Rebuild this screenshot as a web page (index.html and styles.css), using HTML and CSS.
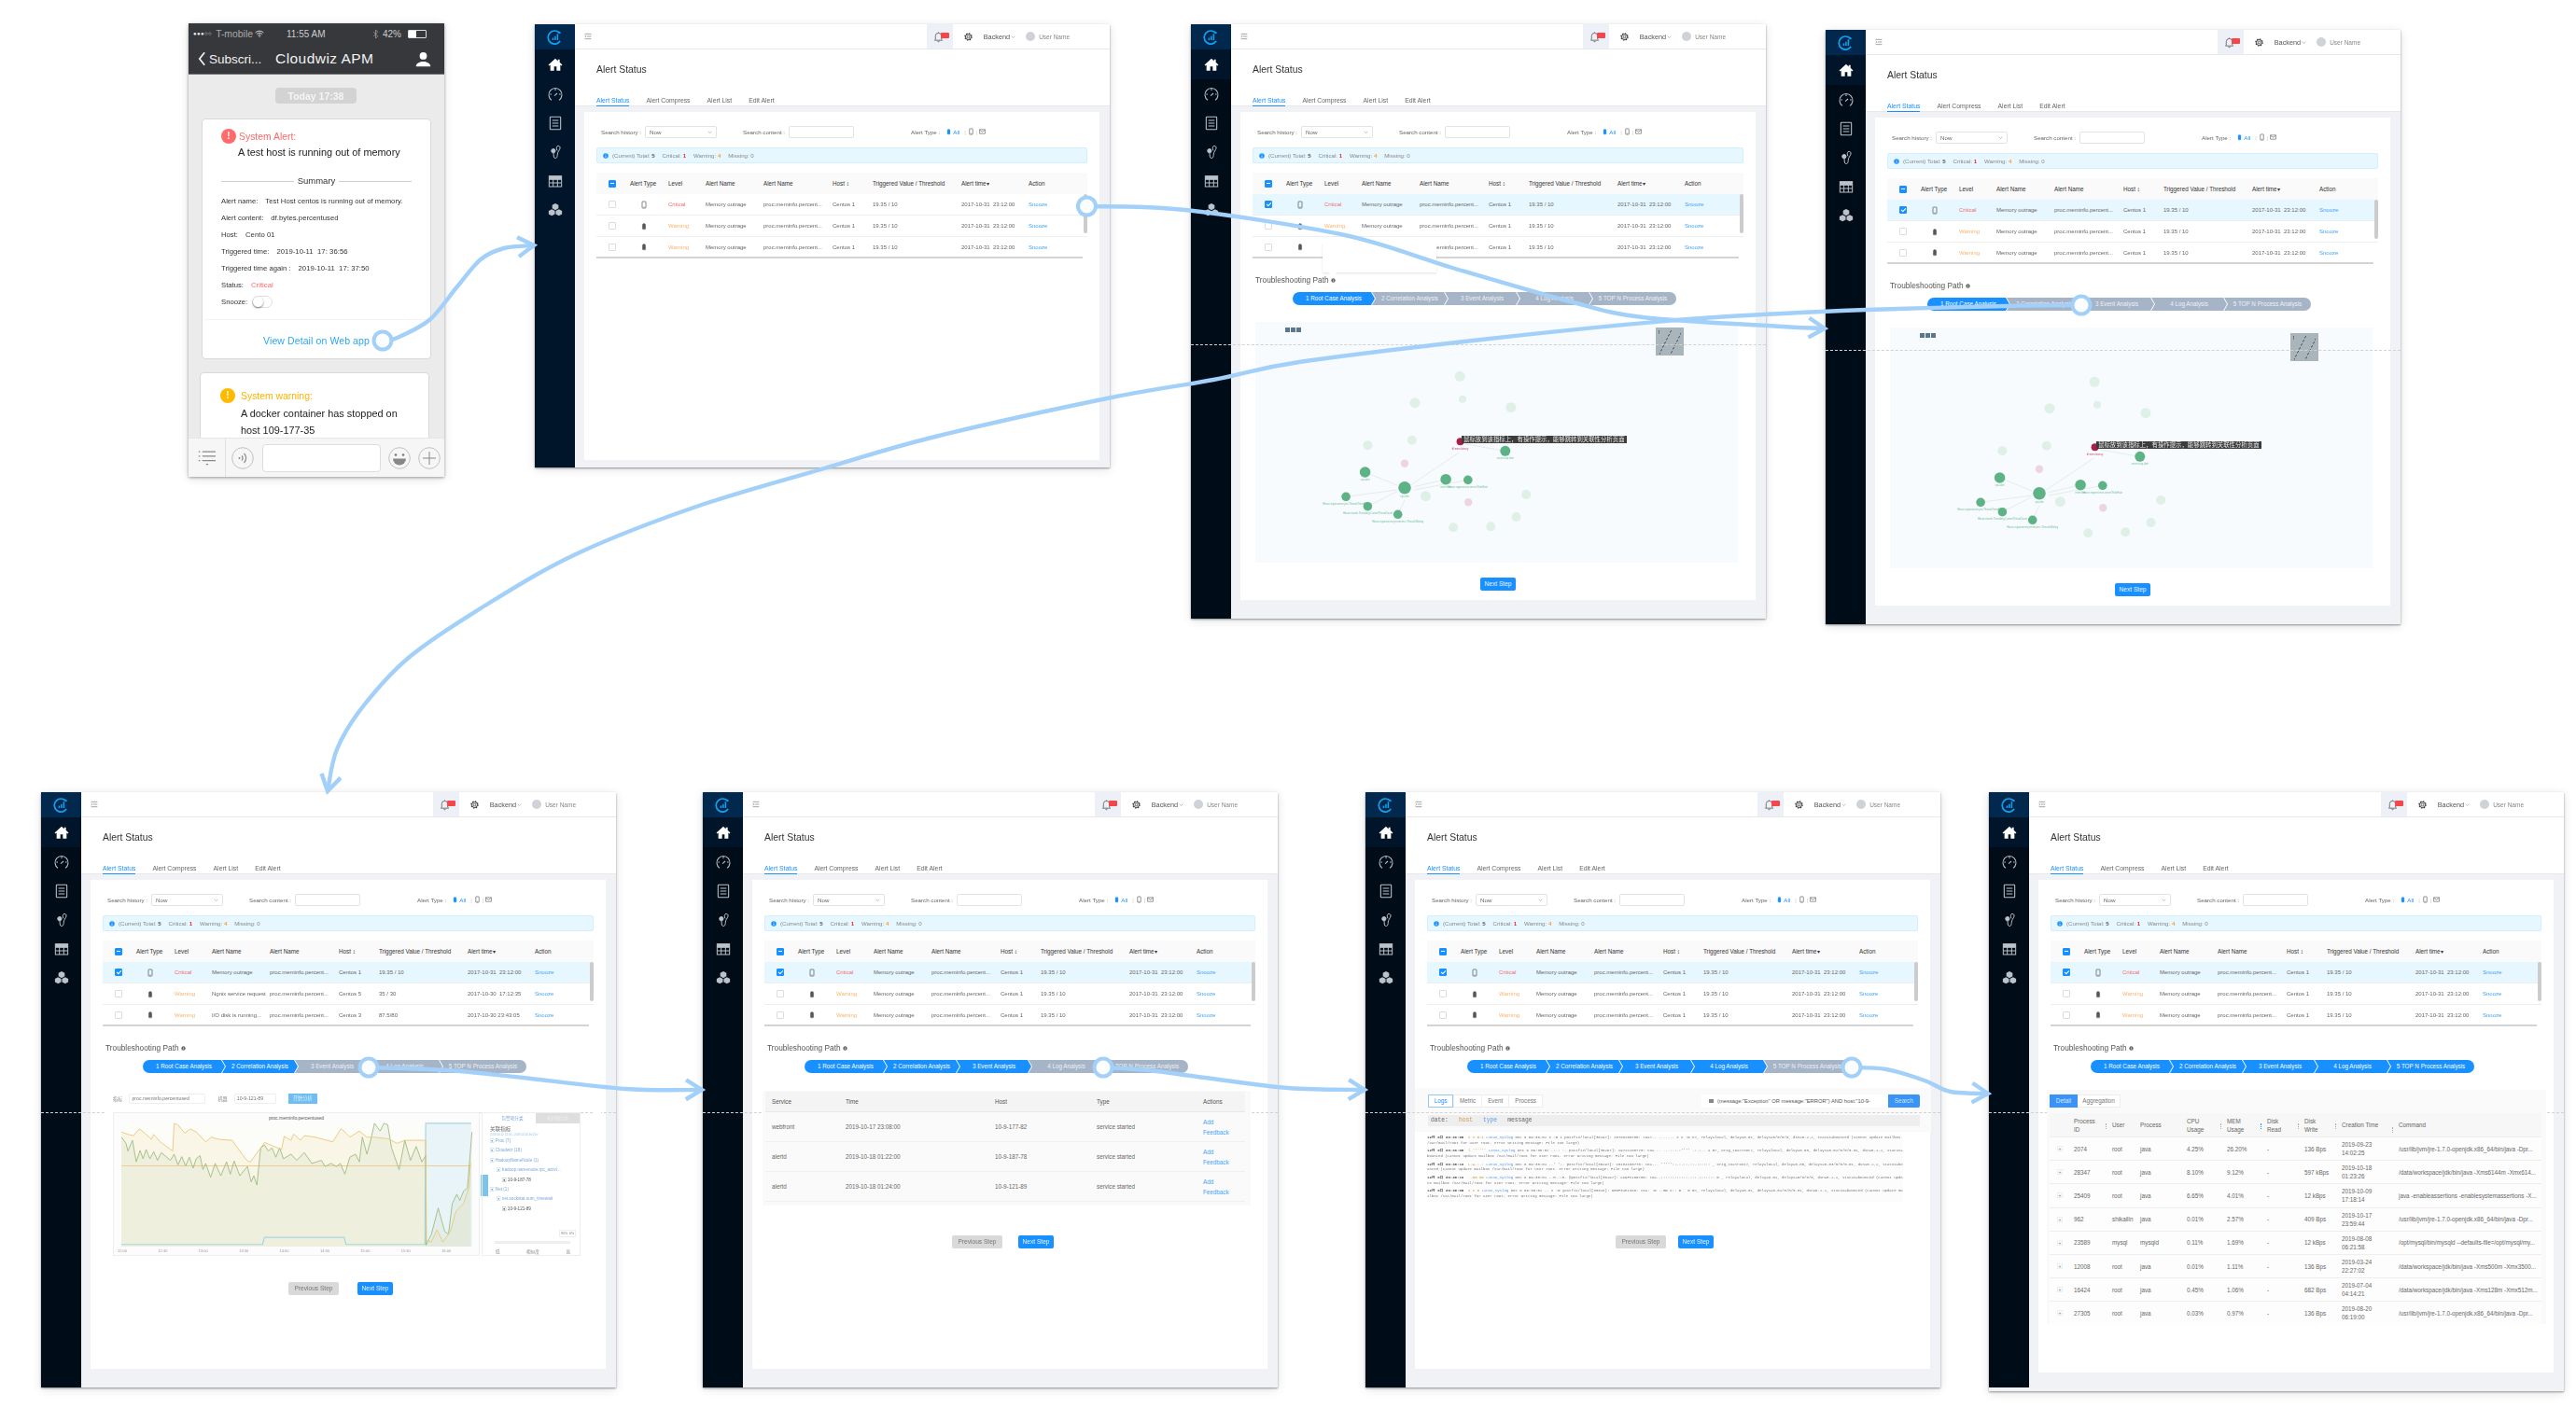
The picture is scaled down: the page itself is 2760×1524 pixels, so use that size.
FILE: index.html
```html
<!DOCTYPE html>
<html lang="en">
<head>
  <meta charset="UTF-8" />
  <title>Cloudwiz APM - alert troubleshooting flow</title>
  <link rel="stylesheet" href="styles.css">
</head>
<body>
  <svg class="defs" aria-hidden="true">
    <symbol id="i-home" viewBox="0 0 24 24"><path d="M12 2.5 .8 12.6l1.5 1.7L4 12.8V22h6v-6.5h4V22h6v-9.2l1.7 1.5 1.5-1.7-4.2-3.8V4h-3v2.8z" fill="currentColor"/></symbol>
    <symbol id="i-gauge" viewBox="0 0 24 24"><g fill="none" stroke="currentColor" stroke-width="1.6"><path d="M6 21.5A10.5 10.5 0 1 1 18 21.5"/><path d="M10.6 14.4 15 10.5"/><path d="M12 3.5v2.5M3.5 12H6M18 12h2.5"/></g></symbol>
    <symbol id="i-list" viewBox="0 0 24 24"><g fill="none" stroke="currentColor" stroke-width="1.6"><rect x="3.5" y="2" width="17" height="20" rx="1"/><path d="M7 7.5h10M7 12h10M7 16.500h10"/></g></symbol>
    <symbol id="i-stetho" viewBox="0 0 24 24"><g fill="none" stroke="currentColor" stroke-width="1.5"><path d="M15 2.500c2-1 4 0 4.500 1.500.8 3-2.500 6-3.500 9-1 3-.5 6-1.500 7.500-1.500 2-4.500 1.500-5-1-.5-2 0-4-.5-6"/><path d="M15 2.500c-1.500 2-1.500 4 0 7"/><circle cx="8.800" cy="10" r="3.200" fill="currentColor"/></g></symbol>
    <symbol id="i-table" viewBox="0 0 24 24"><g fill="none" stroke="currentColor" stroke-width="1.500"><rect x="2" y="4" width="20" height="17"/><path d="M2 9.500h20M2 15h20M8.500 4v17M15.500 4v17"/></g><rect x="2" y="4" width="20" height="5" fill="currentColor"/></symbol>
    <symbol id="i-cubes" viewBox="0 0 24 24"><g fill="currentColor"><path d="m12 1.500 5 2.700v5.300l-5 2.700-5-2.700V4.200z"/><path d="m6.300 10.800 5 2.700v5.300l-5 2.700-5-2.700v-5.300z"/><path d="m17.700 10.800 5 2.700v5.300l-5 2.700-5-2.700v-5.300z"/></g></symbol>
    <symbol id="i-logo" viewBox="0 0 24 24"><path d="M19.500 6.500A10 10 0 1 0 20 18.500" fill="none" stroke="#12a0f0" stroke-width="2.400"/><path d="M19 3.500l2.500 3-3.800.6zM8 13.500h2.200V17H8zM11.500 11h2.200v6h-2.200zM15 7.500h2.200V17H15z" fill="#12a0f0"/></symbol>
    <symbol id="i-menu" viewBox="0 0 24 24"><path d="M2 4h20M8 12h14M2 20h20M2 9l3.500 3L2 15" fill="none" stroke="#7d8287" stroke-width="2.200"/></symbol>
    <symbol id="i-bell" viewBox="0 0 24 24"><path d="M5 18V10a7 7 0 0 1 14 0v8l2 2H3zM10 21.500a2 2 0 0 0 4 0M12 1v2" fill="none" stroke="#555" stroke-width="1.700"/></symbol>
    <symbol id="i-gear" viewBox="0 0 24 24"><g fill="none" stroke="#333"><circle cx="12" cy="12" r="8" stroke-width="2.400"/><circle cx="12" cy="12" r="9.500" stroke-width="3.500" stroke-dasharray="3.700 3.760"/><circle cx="12" cy="12" r="3.500" stroke-width="2"/></g></symbol>
    <symbol id="i-pill" viewBox="0 0 24 24"><path d="M7 21V8a5 5 0 0 1 10 0v13zM10 23h4" fill="currentColor" stroke="currentColor"/></symbol>
    <symbol id="i-mobile" viewBox="0 0 24 24"><rect x="6" y="1.500" width="12" height="21" rx="2" fill="none" stroke="currentColor" stroke-width="2.200"/><path d="M10 19.500h4" stroke="currentColor" stroke-width="1.500"/></symbol>
    <symbol id="i-mail" viewBox="0 0 24 24"><path d="M2 4.500h20v15H2zM2 6l10 7 10-7" fill="none" stroke="currentColor" stroke-width="2"/></symbol>
    <symbol id="i-info" viewBox="0 0 24 24"><circle cx="12" cy="12" r="11" fill="#1890ff"/><path d="M12 5.500v2.500M12 10.500V19" stroke="#fff" stroke-width="3"/></symbol>
    <symbol id="i-dot" viewBox="0 0 24 24"><circle cx="12" cy="12" r="10.500" fill="#666"/><path d="M12 6v2.500M12 11v7" stroke="#fff" stroke-width="3"/></symbol>
    <symbol id="i-chev" viewBox="0 0 24 24"><path d="m3 8 9 9 9-9" fill="none" stroke="#888" stroke-width="2.500"/></symbol>
  </svg>

  <div class="canvas" id="canvas">
    <section class="phone">
      <div class="status-bar">
        <span class="signal">●●●○○</span><span class="carrier">T-mobile</span>
        <svg class="wifi" viewBox="0 0 24 18"><path d="M1.500 6.500c6-5.500 15-5.500 21 0M5 10c4-3.500 10-3.500 14 0M8.500 13.500c2-1.500 5-1.500 7 0" fill="none" stroke="#eee" stroke-width="2.200"/><circle cx="12" cy="16.500" r="1.500" fill="#eee"/></svg>
        <span class="clock">11:55 AM</span>
        <svg class="bt" viewBox="0 0 12 24"><path d="M1 7l10 10-5 5V2l5 5L1 17" fill="none" stroke="#aaa" stroke-width="1.500"/></svg>
        <span class="batt-pct">42%</span>
        <span class="battery"><i></i></span>
      </div>
      <div class="nav-bar">
        <svg class="back" viewBox="0 0 12 24"><path d="M10 2 2 12l8 10" fill="none" stroke="#f2f2f2" stroke-width="2.600"/></svg>
        <span class="back-label">Subscri...</span>
        <span class="nav-title">Cloudwiz APM</span>
        <svg class="user" viewBox="0 0 24 24"><circle cx="12" cy="7" r="5.500" fill="#fff"/><path d="M1 23c0-5 5-6 8-7.500h6c3 1.500 8 2.500 8 7.500z" fill="#fff"/></svg>
      </div>
      <div class="chat">
        <div class="date-pill">Today 17:38</div>
        <div class="msg-card">
          <div class="alert-head"><span class="badge badge-red">!</span><span class="head-red">System Alert:</span></div>
          <p class="alert-msg">A test host is running out of memory</p>
          <div class="summary"><i></i><span>Summary</span><i></i></div>
          <div class="fact">Alert name:<b>Test Host centos is running out of memory.</b></div>
          <div class="fact">Alert content:<b>df.bytes.percentused</b></div>
          <div class="fact">Host:<b>Cento 01</b></div>
          <div class="fact">Triggered time:<b>2019-10-11&nbsp; 17: 36:56</b></div>
          <div class="fact">Triggered time again :<b>2019-10-11&nbsp; 17: 37:50</b></div>
          <div class="fact">Status:<b class="critical">Critical</b></div>
          <div class="fact">Snooze:<span class="toggle"><i></i></span></div>
          <div class="msg-link">View Detail on Web app</div>
        </div>
        <div class="msg-card msg-card-warn">
          <div class="alert-head"><span class="badge badge-amber">!</span><span class="head-amber">System warning:</span></div>
          <p class="alert-msg">A docker container has stopped on<br>host 109-177-35</p>
        </div>
      </div>
      <div class="tool-bar">
        <span class="tool-menu"><svg viewBox="0 0 24 24"><path d="M6 4h18M6 10h18M6 16h18M1 4h2M1 10h2M1 16h2M11 21h3" fill="none" stroke="#8a8a8a" stroke-width="1.600"/></svg></span>
        <svg class="tool-ic tool-voice" viewBox="0 0 24 24"><circle cx="12" cy="12" r="11.300" fill="none" stroke="#aaa" stroke-width=".7"/><path d="M11 9.500a3.500 3.500 0 0 1 0 5M13.500 7a7 7 0 0 1 0 10" fill="none" stroke="#888" stroke-width="1.200"/><circle cx="8.500" cy="12" r="1" fill="#888"/></svg>
        <span class="tool-input"></span>
        <svg class="tool-ic" viewBox="0 0 24 24"><circle cx="12" cy="12" r="11.300" fill="none" stroke="#aaa" stroke-width=".7"/><circle cx="8" cy="8.500" r="1.300" fill="#777"/><circle cx="16" cy="8.500" r="1.300" fill="#777"/><path d="M5 12.500h14a7 7 0 0 1-14 0z" fill="#888"/></svg>
        <svg class="tool-ic" viewBox="0 0 24 24"><circle cx="12" cy="12" r="11.300" fill="none" stroke="#aaa" stroke-width=".7"/><path d="M12 5v14M5 12h14" stroke="#888" stroke-width="1"/></svg>
      </div>
    </section>
  </div>

  <script src="app.js"></script>
</body>
</html>
```

FILE: styles.css
```css
:root {
  --blue: #1890ff;
  --line: #a2d0f9;
  --grey-step: #a5b4c6;
  --page-bg: #f0f2f5;
  --text: #666;
  --text-dark: #3c3c3c;
}
html, body {
  margin: 0;
  padding: 0;
  background: #fff;
}
body {
  font-family: "Liberation Sans", "Noto Sans CJK SC", sans-serif;
  color: var(--text);
}
.defs {
  position: absolute;
  width: 0;
  height: 0;
}
.canvas {
  position: relative;
  width: 2760px;
  height: 1524px;
  overflow: hidden;
  filter: blur(.4px);
}

/* phone */
.phone {
  position: absolute;
  left: 202px;
  top: 25px;
  width: 274px;
  height: 486px;
  display: flex;
  flex-direction: column;
  background: #ebebeb;
  box-shadow: 0 1px 3px rgba(0,0,0,.35), 0 2px 10px rgba(0,0,0,.12);
}
.status-bar {
  height: 22px;
  padding: 0 6px 0 5px;
  display: flex;
  align-items: center;
  background: #36383c;
  color: #ccc;
  font-size: 10px;
}
.signal { font-size: 6px; letter-spacing: .4px; color: #eee; }
.carrier { margin-left: 4px; color: #aaa; font-size: 10.400px; }
.wifi { width: 10px; height: 8px; margin-left: 2px; }
.clock { margin-left: 24px; width: 60px; color: #ccc; font-size: 10px; }
.bt { width: 7px; height: 11px; margin-left: 32px; }
.batt-pct { margin-left: 4px; color: #ccc; }
.battery {
  margin-left: 7px;
  width: 18px;
  height: 7px;
  border: 1px solid #ddd;
  border-radius: 1px;
}
.battery i { display: block; width: 8px; height: 7px; background: #fff; }
.nav-bar {
  height: 33px;
  padding: 0 14px 0 10px;
  display: flex;
  align-items: center;
  background: #36383c;
  border-bottom: 1px solid #777;
  box-sizing: border-box;
  color: #f2f2f2;
}
.back { width: 9px; height: 16px; }
.back-label { margin-left: 3px; width: 71px; font-size: 13.500px; white-space: nowrap; }
.nav-title { font-size: 15.500px; letter-spacing: .45px; white-space: nowrap; }
.user { width: 17px; height: 17px; margin-left: auto; }
.chat {
  flex: 1;
  min-height: 0;
  overflow: hidden;
}
.date-pill {
  width: 87px;
  height: 17px;
  margin: 14px auto 0 93px;
  border-radius: 4px;
  background: #d3d3d3;
  color: #f5f5f5;
  font-size: 10.500px;
  font-weight: bold;
  line-height: 18px;
  text-align: center;
}
.msg-card {
  width: 246px;
  height: 258px;
  margin: 16px 0 0 14px;
  box-sizing: border-box;
  overflow: hidden;
  background: #fff;
  border: 1px solid #d9d9d9;
  border-radius: 4px;
}
.msg-card-warn {
  margin: 14px 0 0 12px;
  height: 120px;
  padding-top: 6px;
}
.alert-head {
  padding: 10px 0 0 20px;
  display: flex;
  align-items: center;
  gap: 3px;
  font-size: 10.400px;
}
.msg-card-warn .alert-head { gap: 6px; padding-left: 21px; }
.badge {
  width: 16px;
  height: 16px;
  border-radius: 50%;
  color: #fff;
  font-size: 10px;
  font-weight: bold;
  line-height: 16px;
  text-align: center;
}
.badge-red { background: #ff6b6b; }
.badge-amber { background: #ffba00; }
.head-red { color: #f96a6a; }
.head-amber { color: #ffb400; }
.alert-msg {
  margin: 0 0 0 38px;
  color: #222;
  font-size: 10.900px;
  line-height: 18px;
}
.msg-card-warn .alert-msg { margin-left: 43px; margin-top: 2px; }
.summary {
  margin: 13px 20px 0 20px;
  display: flex;
  align-items: center;
  gap: 4px;
  color: #333;
  font-size: 9.500px;
  line-height: 18px;
}
.summary i { flex: 1; height: 1px; background: #ccc; }
.fact {
  margin-left: 20px;
  display: flex;
  align-items: center;
  height: 18px;
  color: #333;
  font-size: 7.700px;
  white-space: nowrap;
}
.summary + .fact { margin-top: 3px; }
.fact b { margin-left: 8px; font-weight: normal; letter-spacing: .05px; }
.fact b.critical { color: #f96a6a; }
.toggle {
  margin-left: 5px;
  width: 20px;
  height: 11px;
  border: 1px solid #ddd;
  border-radius: 7px;
}
.toggle i {
  display: block;
  width: 11px;
  height: 11px;
  border-radius: 50%;
  background: #fff;
  box-shadow: 0 1px 2px rgba(0,0,0,.5);
}
.msg-link {
  margin: 10px 2px 0;
  border-top: 1px solid #f4f4f4;
  color: #2aa7f5;
  font-size: 10.500px;
  letter-spacing: .1px;
  line-height: 44px;
  text-align: center;
}
.tool-bar {
  height: 42px;
  display: flex;
  align-items: center;
  background: #f6f6f6;
  border-top: 1px solid #e6e6e6;
  box-sizing: border-box;
}
.tool-menu {
  width: 39px;
  height: 100%;
  border-right: 1px solid #e2e2e2;
  display: flex;
  align-items: center;
  justify-content: center;
}
.tool-menu svg { width: 19px; height: 19px; }
.tool-ic { width: 24px; height: 24px; margin-left: 8px; }
.tool-voice { margin-left: 6px; }
.tool-input {
  margin-left: 9px;
  width: 127px;
  height: 30px;
  background: #fff;
  border: 1px solid #ddd;
  border-radius: 4px;
  box-sizing: border-box;
}
.tool-input + .tool-ic { margin-left: 8px; }

/* app windows */
.win {
  position: absolute;
  width: 616px;
  display: flex;
  background: var(--page-bg);
  box-shadow: 0 1px 2px rgba(0,0,0,.4), 0 2px 10px rgba(0,0,0,.12);
}
.fold {
  position: absolute;
  left: 0;
  right: 0;
  top: 343px;
  border-top: 1px dashed #d2d2d2;
  z-index: 1;
}
.side {
  width: 43px;
  flex: none;
  background: #000c17;
  color: #bcc2c9;
  display: flex;
  flex-direction: column;
  align-items: center;
}
.side-navy { background: #001529; }
.side-short { align-self: flex-start; height: 638px; }
.side-logo {
  width: 100%;
  height: 27px;
  display: flex;
  align-items: center;
  justify-content: center;
  background: #02284e;
}
.side-logo svg { width: 17px; height: 17px; }
.side-item {
  width: 100%;
  height: 31px;
  display: flex;
  align-items: center;
  justify-content: center;
}
.side-item svg { width: 16px; height: 16px; }
.side-item-on {
  height: 32px;
  background: #001529;
  color: #fff;
}
.main {
  flex: 1;
  min-width: 0;
  display: flex;
  flex-direction: column;
}
.topbar {
  height: 27px;
  flex: none;
  padding: 0 43px 0 10px;
  box-sizing: border-box;
  display: flex;
  align-items: center;
  background: #fff;
  border-bottom: 1px solid #e8e8e8;
  font-size: 6.500px;
}
.topbar .menu { width: 8px; height: 8px; }
.bell-box {
  margin-left: auto;
  width: 28px;
  height: 100%;
  position: relative;
  display: flex;
  align-items: center;
  justify-content: center;
  background: #edf1f7;
}
.bell-box svg { width: 11px; height: 13px; margin-left: -2px; }
.bell-badge {
  position: absolute;
  left: 15px;
  top: 9px;
  width: 9px;
  height: 6px;
  border-radius: 1px;
  background: #f5474b;
}
.gear { width: 9px; height: 9px; margin-left: 12px; }
.backend { margin-left: 12px; color: #555; font-size: 7.300px; white-space: nowrap; }
.backend svg { width: 5px; height: 5px; margin-left: 1px; }
.avatar {
  width: 10px;
  height: 10px;
  margin-left: 11px;
  border-radius: 50%;
  background: #cfd3d8;
}
.user-name { margin-left: 4px; color: #888; white-space: nowrap; }
.page-head {
  height: 61px;
  flex: none;
  padding-left: 23px;
  box-sizing: border-box;
  background: #fff;
  border-bottom: 1px solid #e8e8e8;
}
.page-title {
  margin: 15px 0 0;
  color: #333;
  font-size: 10.400px;
  font-weight: normal;
  line-height: 14px;
}
.tabs {
  margin-top: 19px;
  display: flex;
  gap: 18px;
  font-size: 6.850px;
}
.tab { height: 12px; line-height: 14px; white-space: nowrap; }
.tab-on {
  color: var(--blue);
  border-bottom: 1px solid var(--blue);
}
.card {
  flex: 1;
  margin: 6px 11px 20px 10px;
  padding: 0 13px;
  min-height: 0;
  background: #fff;
}
.card-tall { margin-bottom: 8px; }
.search-row {
  height: 13px;
  margin-top: 14.500px;
  padding-left: 5px;
  display: flex;
  align-items: center;
  color: #666;
  font-size: 6.200px;
  white-space: nowrap;
}
.field {
  height: 13px;
  box-sizing: border-box;
  border: 1px solid #e3e3e3;
  border-radius: 2px;
  background: #fff;
}
.field-select {
  width: 77px;
  margin-left: 4px;
  padding: 0 4px;
  display: flex;
  align-items: center;
  justify-content: space-between;
}
.field-select svg { width: 5px; height: 5px; }
.field-input { width: 70px; margin-left: 4px; }
.lbl-content { margin-left: 28px; }
.lbl-type { margin-left: 61px; }
.type-ic { width: 7px; height: 8px; color: #555; }
.type-ic-bell { margin-left: 6px; color: var(--blue); }
.type-all { color: var(--blue); margin: 0 3px 0 1px; }
.sep { margin: 0 2px; color: #ccc; }
.notice {
  height: 17px;
  margin-top: 10.500px;
  padding-left: 6px;
  box-sizing: border-box;
  display: flex;
  align-items: center;
  gap: 8px;
  background: #e6f7ff;
  border: 1px solid #d2eeff;
  border-radius: 2px;
  color: #888;
  font-size: 6.100px;
  white-space: nowrap;
}
.notice svg { width: 6px; height: 6px; margin-right: -4px; }
.notice b { font-weight: bold; color: #555; }
.notice .n-red { color: #f5222d; }
.notice .n-orange { color: #fa9d2b; }
.alerts {
  position: relative;
  margin-top: 10px;
}
.a-row {
  display: grid;
  grid-template-columns: 36px 41px 40px 62px 74px 43px 95px 72px 63px;
  align-items: center;
  height: 23px;
  box-sizing: border-box;
  border-bottom: 1px solid #eee;
  font-size: 6px;
  white-space: nowrap;
}
.a-head {
  background: #fafafa;
  border-bottom: 0;
  color: #333;
  font-size: 6.300px;
}
.a-row-on { background: #e6f7ff; }
.a-row:nth-child(4) {
  width: 521px;
  border-bottom: 2px solid #d4d4d4;
}
.chk {
  display: block;
  width: 8px;
  height: 8px;
  margin-left: 13px;
  box-sizing: border-box;
  border: 1px solid #ddd;
  border-radius: 1px;
  background: #fff;
  position: relative;
}
.chk-minus, .chk-on {
  background: var(--blue);
  border-color: var(--blue);
}
.chk-minus::after {
  content: "";
  position: absolute;
  left: 1px;
  right: 1px;
  top: 2.500px;
  height: 1px;
  background: #fff;
}
.chk-on::after {
  content: "";
  position: absolute;
  left: 2px;
  top: 0;
  width: 2px;
  height: 4px;
  border: solid #fff;
  border-width: 0 1px 1px 0;
  transform: rotate(45deg);
}
.a-ic { width: 8px; height: 9px; margin-left: 11px; color: #555; }
.lv-crit { color: #f5696b; }
.lv-warn { color: #fdb26a; }
.link { color: #3ea3f7; }
.scroll-thumb {
  position: absolute;
  left: 522px;
  top: 23px;
  width: 4px;
  height: 42px;
  border-radius: 2px;
  background: #ccc;
}
.popover {
  position: absolute;
  left: 75px;
  top: 75px;
  width: 122px;
  height: 32px;
  background: #fff;
  box-shadow: 0 1px 2px rgba(0,0,0,.12);
}
.popover::after {
  content: "";
  position: absolute;
  left: 8px;
  bottom: -3px;
  width: 6px;
  height: 6px;
  background: #fff;
  transform: rotate(45deg);
}
.path-head {
  height: 12px;
  margin: 17px 0 0 3px;
  display: flex;
  align-items: center;
  gap: 2px;
  color: #555;
  font-size: 8.300px;
  white-space: nowrap;
}
.path-head svg { width: 5px; height: 5px; }
.steps {
  width: 411px;
  height: 14px;
  margin: 7px 0 0 43px;
  display: flex;
  border-radius: 7px;
  overflow: hidden;
}
.step {
  height: 14px;
  margin-right: -3px;
  flex: none;
  background: var(--grey-step);
  color: #eef1f5;
  font-size: 6.300px;
  line-height: 14px;
  text-align: center;
  white-space: nowrap;
  clip-path: polygon(0 0, calc(100% - 4px) 0, 100% 50%, calc(100% - 4px) 100%, 0 100%, 4px 50%);
}
.step:first-child { clip-path: polygon(0 0, calc(100% - 4px) 0, 100% 50%, calc(100% - 4px) 100%, 0 100%); }
.step:last-child { clip-path: polygon(0 0, 100% 0, 100% 100%, 0 100%, 4px 50%); }
.step-on { background: var(--blue); color: #fff; }
.btns {
  display: flex;
  font-size: 6.600px;
  white-space: nowrap;
}
.btn {
  height: 14px;
  width: 38px;
  box-sizing: border-box;
  border-radius: 2px;
  background: var(--blue);
  color: #e8f4ff;
  line-height: 14px;
  text-align: center;
}
.btn-prev {
  width: 54px;
  background: #d9d9d9;
  color: #777;
}

/* step 1: topology */
.topo {
  position: relative;
  width: 517px;
  height: 258px;
  margin: 18px 0 0 3px;
  background: #f7fbfe;
}
.topo-graph { position: absolute; inset: 0; width: 100%; height: 100%; }
.topo-tools {
  position: absolute;
  left: 32px;
  top: 6px;
  display: flex;
  gap: 1px;
}
.topo-tools i { width: 5px; height: 5px; background: #59788e; }
.topo-mini {
  position: absolute;
  left: 429px;
  top: 6px;
  width: 30px;
  height: 30px;
  background: #a9b5ba;
}
.topo-tip {
  position: absolute;
  left: 221px;
  top: 122px;
  height: 8px;
  padding: 0 2px;
  background: #3c3c3c;
  color: #e8e8e8;
  font-size: 6.400px;
  line-height: 8px;
  white-space: nowrap;
}
.btns-topo { margin: 16px 0 0 244px; }

/* step 2: metric chart */
.filter-row {
  height: 11px;
  margin: 22px 0 0 11px;
  display: flex;
  align-items: center;
  color: #888;
  font-size: 5.200px;
  white-space: nowrap;
}
.filter-row .field { height: 11px; padding-left: 2px; line-height: 9px; border-color: #eee; color: #777; }
.f-metric { width: 82px; margin-left: 7px; }
.f-host { width: 45px; margin-left: 7px; }
.f-lbl2 { margin-left: 13px; }
.f-go {
  width: 31px;
  height: 11px;
  margin-left: 13px;
  background: #70bdf2;
  color: #dcefff;
  line-height: 11px;
  text-align: center;
}
.chart-row {
  position: relative;
  z-index: 2;
  height: 154px;
  margin: 9px 0 0 11px;
  display: flex;
  gap: 2px;
  box-shadow: 0 0 0 8px #fff;
}
.chart {
  position: relative;
  width: 393px;
  box-sizing: border-box;
  border: 1px solid #eee;
  background: #fcfcfc;
}
.chart svg { position: absolute; inset: 0; width: 100%; height: 100%; }
.chart-title {
  position: absolute;
  left: 0;
  right: 0;
  top: 2px;
  color: #555;
  font-size: 5px;
  text-align: center;
}
.chart-axis {
  position: absolute;
  left: 4px;
  bottom: 2px;
  display: grid;
  grid-template-columns: repeat(9, 43.400px);
  color: #999;
  font-size: 4px;
}
.chart-handle {
  position: absolute;
  left: 393px;
  top: 66px;
  width: 8px;
  height: 23px;
  background: #7cc4f0;
}
.chart-side {
  position: relative;
  width: 106px;
  box-sizing: border-box;
  border: 1px solid #eee;
  padding-left: 8px;
  color: #7aa8d8;
  font-size: 4.600px;
  white-space: nowrap;
}
.side-tabs {
  margin: 0 0 0 -1px;
  height: 11px;
  display: grid;
  grid-template-columns: 50px 47px;
  line-height: 11px;
  text-align: center;
}
.side-tab-off { background: #dedede; color: #eee; }
.rel-title { margin-top: 3px; color: #666; font-size: 5.600px; line-height: 7px; }
.rel-date { color: #8fc0ef; font-size: 3px; line-height: 4px; }
.rel { height: 10.400px; line-height: 10px; }
.rel-1 { padding-left: 7px; }
.rel-2 { padding-left: 13px; color: #555; }
.slider {
  position: absolute;
  left: 13px;
  right: 10px;
  bottom: 12px;
  height: 3px;
  background: #eee;
}
.slider-labels {
  position: absolute;
  left: 14px;
  right: 10px;
  bottom: 1px;
  display: flex;
  justify-content: space-between;
  color: #888;
}
.slider-val {
  position: absolute;
  right: 4px;
  bottom: 19px;
  padding: 1px;
  border: 1px solid #eee;
  color: #777;
  font-size: 3.500px;
}
.btns-chart { margin: 28px 0 0 199px; gap: 20px; }

/* step 3: events */
.pane-events {
  position: relative;
  z-index: 2;
  margin: 19px 0 0 -2px;
  width: 523px;
  padding: 1px 6px 4px 3px;
  box-sizing: border-box;
  background: #fafafa;
}
.e-row {
  display: grid;
  grid-template-columns: 79px 160px 109px 114px 52px;
  align-items: center;
  height: 32px;
  padding-left: 7px;
  box-sizing: border-box;
  border-bottom: 1px solid #f0f0f0;
  font-size: 6.300px;
  line-height: 11px;
  white-space: nowrap;
}
.e-head { height: 22px; background: #f4f4f4; color: #555; border-bottom: 1px solid #e8e8e8; }
.btns-events { margin: 32px 0 0 201px; gap: 17px; }

/* step 4: logs */
.pane-logs {
  margin: 16px -14px 0 -13px;
  height: 47px;
  padding: 7px 12px 0 14px;
  box-sizing: border-box;
  background: #fafafa;
}
.logs-bar {
  height: 14px;
  display: flex;
  font-size: 6.300px;
  white-space: nowrap;
}
.seg {
  display: flex;
  background: #fff;
  border: 1px solid #eee;
  box-sizing: border-box;
  line-height: 12px;
  color: #777;
}
.seg span { padding: 0 6px; border-left: 1px solid #eee; text-align: center; }
.seg .seg-on {
  width: 25px;
  padding: 0;
  border: 1px solid #91c9f7;
  margin: -1px 0 -1px -1px;
  color: var(--blue);
  line-height: 12px;
}
.logs-q {
  margin-left: auto;
  width: 200px;
  padding-left: 8px;
  box-sizing: border-box;
  overflow: hidden;
  display: flex;
  align-items: center;
  gap: 4px;
  background: #fff;
  color: #555;
  font-size: 5.800px;
}
.logs-q i { width: 5px; height: 4px; flex: none; background: #888; }
.logs-go {
  width: 34px;
  border-radius: 0 2px 2px 0;
  background: #3a93f7;
  color: #cfe6ff;
  line-height: 14px;
  text-align: center;
}
.logs-head {
  height: 12px;
  margin-top: 8px;
  padding-left: 3px;
  display: flex;
  gap: 11px;
  background: #eee;
  font-family: "Liberation Mono", monospace;
  font-size: 6.300px;
  line-height: 12px;
  color: #666;
}
.logs-head .k1 { color: #c9a14a; }
.logs-head .k2 { color: #5a9de6; }
.log-list {
  margin-top: 4px;
  width: 510px;
  background: #fcfcfc;
  font-family: "Liberation Mono", "Noto Sans CJK SC", monospace;
  font-size: 4px;
  color: #777;
}
.log-entry {
  height: 14.300px;
  line-height: 5.800px;
  word-break: break-all;
  overflow: hidden;
}
.log-entry b { color: #555; }
.log-entry u { text-decoration: none; color: #c9a14a; }
.log-entry em { font-style: normal; color: #4d97ea; }
.btns-logs { margin: 35.500px 0 0 202px; gap: 13px; }

/* step 5: processes */
.pane-proc {
  position: relative;
  z-index: 2;
  margin: 18px -5px 0 -4px;
  padding: 5px 5px 0 3px;
  background: #fafafa;
}
.proc-tabs {
  width: 76px;
  height: 14px;
  display: flex;
  background: #fff;
  border: 1px solid #eee;
  box-sizing: border-box;
  font-size: 6.400px;
  line-height: 12px;
  text-align: center;
  color: #777;
}
.proc-tabs span { flex: 1; white-space: nowrap; }
.proc-tabs .proc-on {
  flex: none;
  width: 30px;
  margin: -1px 0 -1px -1px;
  background: #3a93f7;
  color: #d7e9ff;
  line-height: 14px;
}
.p-row {
  display: grid;
  grid-template-columns: 26px 41px 30px 50px 43px 43px 40px 40px 61px 153px;
  align-items: center;
  height: 25.200px;
  box-sizing: border-box;
  border-bottom: 1px solid #eee;
  background: #fdfdfd;
  font-size: 6.300px;
  line-height: 9px;
  white-space: nowrap;
}
.p-head {
  margin-top: 6px;
  height: 26px;
  background: #f7f7f7;
  color: #666;
}
.p-row:last-child { height: 24px; border-bottom: 0; }
.p-cmd { overflow: hidden; text-overflow: ellipsis; }
.p-exp {
  display: block;
  width: 6px;
  height: 6px;
  margin-left: 8px;
  border: 1px solid #eee;
  box-sizing: border-box;
  color: #888;
  font-size: 5px;
  line-height: 4px;
  text-align: center;
}
.p-sort { position: relative; }
.p-sort::after {
  content: "";
  position: absolute;
  right: 4px;
  top: 7px;
  width: 2px;
  height: 6px;
  border-left: 1px dotted #aaa;
}
.p-sort-on::after { border-color: var(--blue); }

/* flow arrows */
.flow {
  position: absolute;
  left: 0;
  top: 0;
  width: 2760px;
  height: 1524px;
  z-index: 5;
}
.flow-line {
  fill: none;
  stroke: var(--line);
  stroke-width: 4.400;
}
.flow-dot {
  fill: #fbfdff;
  stroke: var(--line);
  stroke-width: 4;
}
```

FILE: app.js
```js
const canvas = document.getElementById("canvas");

function ic(name, cls) {
  return `<svg class="${cls || ""}"><use href="#i-${name}"/></svg>`;
}

const NAV = ["home", "gauge", "list", "stetho", "table", "cubes"];
const STEPS = [
  ["1 Root Case Analysis", 88], ["2 Correlation Analysis", 81], ["3 Event Analysis", 80],
  ["4 Log Analysis", 81], ["5 TOP N Process Analysis", 93]
];
const MEM_ROWS = [
  ["Critical", "Memory outrage", "Centos 1", "19.35 / 10", "2017-10-31&nbsp; 23:12:00"],
  ["Warning", "Memory outrage", "Centos 1", "19.35 / 10", "2017-10-31&nbsp; 23:12:00"],
  ["Warning", "Memory outrage", "Centos 1", "19.35 / 10", "2017-10-31&nbsp; 23:12:00"]
];
const MIX_ROWS = [
  MEM_ROWS[0],
  ["Warning", "Ngnix service request", "Centos 5", "35 / 30", "2017-10-30&nbsp; 17:12:35"],
  ["Warning", "I/O disk is running...", "Centos 3", "87.5/80", "2017-10-30 23:43:05"]
];

function alertRow(r, i, picked) {
  const on = picked && i === 0;
  return `<div class="a-row ${on ? "a-row-on" : ""}">
    <span class="chk ${on ? "chk-on" : ""}"></span>
    ${ic(i === 0 ? "mobile" : "pill", "a-ic")}
    <span class="${r[0] === "Critical" ? "lv-crit" : "lv-warn"}">${r[0]}</span>
    <span>${r[1]}</span><span>proc.meminfo.percent...</span><span>${r[2]}</span>
    <span>${r[3]}</span><span>${r[4]}</span><span class="link">Snooze</span>
  </div>`;
}

function alertBlock(rows, picked, extra) {
  return `<div class="alerts">
    <div class="a-row a-head">
      <span class="chk chk-minus"></span><span>Alert Type</span><span>Level</span><span>Alert Name</span>
      <span>Alert Name</span><span>Host ↕</span><span>Triggered Value / Threshold</span>
      <span>Alert time▾</span><span>Action</span>
    </div>
    ${rows.map((r, i) => alertRow(r, i, picked)).join("")}
    <div class="scroll-thumb"></div>${extra || ""}
  </div>`;
}

function stepBar(done) {
  return `<div class="path-head">Troubleshooting Path ${ic("dot")}</div>
  <div class="steps">${STEPS.map((s, i) =>
    `<div class="step ${i < done ? "step-on" : ""}" style="width:${s[1]}px">${s[0]}</div>`).join("")}</div>`;
}

function btns(cls, prev) {
  return `<div class="btns ${cls}">${prev ? '<span class="btn btn-prev">Previous Step</span>' : ""}<span class="btn">Next Step</span></div>`;
}

function appWindow(o) {
  const el = document.createElement("section");
  el.className = "win";
  el.style.cssText = `left:${o.x}px;top:${o.y}px;height:${o.h}px`;
  el.innerHTML = `
    ${o.fold === false ? "" : '<div class="fold"></div>'}
    <nav class="side ${o.navy ? "side-navy" : ""} ${o.shortSide ? "side-short" : ""}">
      <div class="side-logo">${ic("logo")}</div>
      ${NAV.map((n, i) => `<div class="side-item ${i === 0 ? "side-item-on" : ""}">${ic(n)}</div>`).join("")}
    </nav>
    <div class="main">
      <header class="topbar">
        ${ic("menu", "menu")}
        <div class="bell-box">${ic("bell")}<i class="bell-badge"></i></div>
        ${ic("gear", "gear")}
        <span class="backend">Backend${ic("chev")}</span>
        <i class="avatar"></i><span class="user-name">User Name</span>
      </header>
      <div class="page-head">
        <h1 class="page-title">Alert Status</h1>
        <div class="tabs"><span class="tab tab-on">Alert Status</span><span class="tab">Alert Compress</span><span class="tab">Alert List</span><span class="tab">Edit Alert</span></div>
      </div>
      <div class="card ${o.tallCard ? "card-tall" : ""}">
        <div class="search-row">Search history :
          <span class="field field-select">Now${ic("chev")}</span>
          <span class="lbl-content">Search content :</span><span class="field field-input"></span>
          <span class="lbl-type">Alert Type :</span>
          ${ic("pill", "type-ic type-ic-bell")}<span class="type-all">All</span><span class="sep">|</span>${ic("mobile", "type-ic")}<span class="sep">|</span>${ic("mail", "type-ic")}
        </div>
        <div class="notice">${ic("info")}<span>(Current) Total: <b>5</b></span><span>Critical: <b class="n-red">1</b></span><span>Warning: <b class="n-orange">4</b></span><span>Missing: 0</span></div>
        ${alertBlock(o.rows, o.picked, o.popover ? '<div class="popover"></div>' : "")}
        ${o.body || ""}
      </div>
    </div>`;
  canvas.appendChild(el);
}

/* topology graph, node positions measured off the reference */
const toX = x => ((x - 183) / 2.45).toFixed(1);
const toY = y => ((y - 585) / 3).toFixed(1);
const FADED = [[720,760,5.500],[602,845,5.500],[727,833,4],[854,860,5.500],[478,982,5],[594,965,5],[630,1145,5.500],[894,1140,5],[868,1212,5],[801,1243,5],[703,1246,5]];
const PINK = [[575,1040,4.200],[742,1165,4.200]];
const SOLID = [
  [839,1000,5.500,"service.top.alert"],[471,1068,5.800,"cpu.alert"],[575,1118,6.800,"cpu.info"],
  [683,1091,5.800,"mem.free"],[741,1093,4.800,"Hbase.regionserver.server.WriteRate"],
  [421,1147,4.800,"Hbase.regionserver.jvm.ThreadsTimedWait"],[478,1178,4.800,"Hbase.master.Threading.CurrentThreadCount"],
  [557,1204,4.800,"Hbase.regionserver.jvm.metrics.ThreadsWaiting"]
];
const EDGES = [[471,1068,555,1110],[421,1147,555,1125],[478,1178,555,1130],[557,1204,575,1158],[683,1091,600,1115],[741,1093,600,1125],[590,1110,718,1005],[839,1000,735,978]];

function topoSvg() {
  const mini = [];
  for (let i = 0; i < 26; i++) {
    mini.push(`<rect x="${432 + (i * 37) % 24}" y="${9 + (i * 23) % 25}" width="1" height="1.500" fill="#56646c"/>`);
  }
  const edges = EDGES.map(e => `<line x1="${toX(e[0])}" y1="${toY(e[1])}" x2="${toX(e[2])}" y2="${toY(e[3])}" stroke="#d8dfdc" stroke-width=".6"/>`);
  const fade = FADED.map(n => `<circle cx="${toX(n[0])}" cy="${toY(n[1])}" r="${n[2]}" fill="#dff0e7"/>`);
  const pink = PINK.map(n => `<circle cx="${toX(n[0])}" cy="${toY(n[1])}" r="${n[2]}" fill="#ecd5df"/>`);
  const solid = SOLID.map(n => `<circle cx="${toX(n[0])}" cy="${toY(n[1])}" r="${n[2]}" fill="#5eb386"/>
    <text x="${toX(n[0])}" y="${(parseFloat(toY(n[1])) + n[2] + 3.500).toFixed(1)}" text-anchor="middle" font-size="2.600" fill="#74bd96">${n[3]}</text>`);
  return `<svg class="topo-graph" viewBox="0 0 517 258">
    ${edges.join("")}${fade.join("")}${pink.join("")}${solid.join("")}
    <circle cx="${toX(721)}" cy="${toY(970)}" r="4" fill="#ad1f48"/>
    <text x="${toX(721)}" y="${toY(995)}" text-anchor="middle" font-size="2.600" fill="#c0506f">df.mem.latency</text>
    ${mini.join("")}
  </svg>`;
}

const topoBody = `<div class="topo">
    <div class="topo-mini"></div>
    ${topoSvg()}
    <div class="topo-tools"><i></i><i></i><i></i></div>
    <div class="topo-tip">鼠标放到该指标上，有操作提示，能够跳转到关联性分析页面</div>
  </div>`;

/* metric chart, coordinates in the chart's own 962x460 box */
const ORANGE = "243,368 260,376 275,380 290,358 305,372 322,392 328,376 345,400 378,430 382,340 392,345 410,372 425,358 440,368 465,400 480,385 500,392 535,395 555,430 575,462 583,465 610,420 620,402 640,412 665,425 672,382 690,395 697,375 715,395 725,380 755,385 785,395 800,400 822,357 835,372 845,385 870,365 890,385 910,385 945,390 970,405 990,395 1045,395 1047,720 1060,725 1075,685 1090,725 1110,690 1125,625 1145,600 1160,545 1163,465";
const GREEN = "243,385 255,405 260,430 272,395 282,465 292,428 300,455 308,425 318,455 328,432 338,460 348,435 372,460 382,440 392,475 402,448 412,478 422,450 432,485 440,455 450,445 458,490 465,470 478,515 490,470 505,510 520,465 530,505 540,462 555,510 575,480 585,530 592,510 600,540 610,420 620,410 630,430 640,420 650,450 660,420 670,455 690,440 705,460 725,435 745,470 770,460 780,480 795,470 810,480 820,470 832,505 845,450 860,440 870,465 878,385 890,440 900,395 910,340 925,365 935,340 945,345 955,420 975,490 990,395 1005,460 1020,415 1035,465 1045,445 1046,735 1060,700 1078,615 1095,690 1105,700 1115,600 1127,570 1135,590 1145,560 1155,550 1167,368";
const AXIS = ["12:00", "12:30", "13:00", "13:30", "14:00", "14:30", "15:00", "15:30", "16:00"];

const chartBody = `<div class="filter-row">指标<span class="field f-metric">proc.meminfo.percentused</span>
    <span class="f-lbl2">机器</span><span class="field f-host">10-9-121-89</span><span class="f-go">开始分析</span></div>
  <div class="chart-row">
    <div class="chart">
      <svg viewBox="223 307 962 460" preserveAspectRatio="none">
        <rect x="243" y="340" width="922" height="400" fill="#fcfcf9"/>
        <rect x="1045" y="340" width="120" height="400" fill="#e8f4f7"/>
        <path d="M243,740 L${ORANGE.replace(/ /g, " L")} L1163,740 Z" fill="#efdfb4" fill-opacity=".26"/>
        <path d="M243,740 L${GREEN.replace(/ /g, " L")} L1167,740 Z" fill="#b9cfa8" fill-opacity=".14"/>
        <path d="M243,478H1165" stroke="#ecca92" fill="none" vector-effect="non-scaling-stroke"/>
        <path d="M243,733H615L620,710H830L835,733H1043L1045,340H1165" stroke="#a4d7e2" stroke-width="1.200" fill="none" vector-effect="non-scaling-stroke"/>
        <polyline points="${GREEN}" fill="none" stroke="#9dbb83" stroke-width=".9" vector-effect="non-scaling-stroke"/>
        <polyline points="${ORANGE}" fill="none" stroke="#ecc777" stroke-width=".9" vector-effect="non-scaling-stroke"/>
      </svg>
      <div class="chart-title">proc.meminfo.percentused</div>
      <div class="chart-axis">${AXIS.map(t => `<span>${t}</span>`).join("")}</div>
      <i class="chart-handle"></i>
    </div>
    <div class="chart-side">
      <div class="side-tabs"><span>告警项分类</span><span class="side-tab-off">拓扑图分类</span></div>
      <div class="rel-title">关联指标</div>
      <div class="rel-date">2019.10.12 12:00 - 2019.10.16 16:20 ▾</div>
      <div class="rel">▣ Proc (7)</div>
      <div class="rel">▣ Cloudwiz (18)</div>
      <div class="rel">▣ HadoopNameNode (1)</div>
      <div class="rel rel-1">▣ hadoop.namenode.rpc_activi...</div>
      <div class="rel rel-2">▣ 10-9-187-78</div>
      <div class="rel">▣ Net (1)</div>
      <div class="rel rel-1">▣ net.sockstat.num_timewait</div>
      <div class="rel rel-2">▣ 10-9-121-89</div>
      <span class="slider-val">90%&nbsp; 6%</span>
      <div class="slider"></div>
      <div class="slider-labels"><span>低</span><span>相似度</span><span>高</span></div>
    </div>
  </div>${btns("btns-chart", true)}`;

const EVENTS = [
  ["webfront", "2019-10-17 23:08:00", "10-9-177-82"],
  ["alertd", "2019-10-18 01:22:00", "10-9-187-78"],
  ["alertd", "2019-10-18 01:24:00", "10-9-121-89"]
];
const eventsBody = `<div class="pane-events">
    <div class="e-row e-head"><span>Service</span><span>Time</span><span>Host</span><span>Type</span><span>Actions</span></div>
    ${EVENTS.map(e => `<div class="e-row"><span>${e[0]}</span><span>${e[1]}</span><span>${e[2]}</span><span>service started</span><span class="link">Add<br>Feedback</span></div>`).join("")}
  </div>${btns("btns-events", true)}`;

const LOGS = [
  ["12月 6日 09:36:05", "x x m:i", "Dec  6 09:36:02   x  :m i postfix/local[30297]: 20788160785: to=&lt;.. ....... x   x  :m n&gt;, relay=local, delay=0.01, delays=0/0/0/0, dsn=5.2.2, status=bounced (cannot update mailbox /var/mail/root for user root. error writing message: File too large)"],
  ["12月 6日 09:36:05", "l ''''''", "Dec  6 09:36:02 .:.:  :. postfix/local[30297]: 1972C160770: to= .. ...:.:.:'''' .:.:.. a  m&gt;, orig_to=&lt;root&gt;, relay=local, delay=0.03, delays=0.02/0/0/0.01, dsn=5.2.2, status=bounced (cannot update mailbox /var/mail/root for user root. error writing message: File too large)"],
  ["12月 6日 09:35:10", "L:A.:.:", "Dec  6 09:35:01 ..' ':. postfix/local[30297]: C51E4160770: to=... '''''::.:.::.::.:::::: , orig_to=&lt;root&gt;, relay=local, delay=0.05, delays=0.03/0/0/0.01, dsn=5.2.2, status=bounced (cannot update mailbox /var/mail/root for user root. error writing message: File too large)"],
  ["12月 6日 09:35:10", "..mm mm", "Dec  6 09:35:01 ..H..:H. @postfix/local[30297]: CC9FC160785: to=..::::::::::::.:::.::::::: m , relay=local, delay=0.01, delays=0/0/0/0, dsn=5.2.2, status=bounced (cannot update mailbox /var/mail/root for user root. error writing message: File too large)"],
  ["12月 6日 09:35:05", "x x m", "Dec  6 09:35:02 .. x :m yostfix/local[30318]: 605F31E1340: to=: :m ..mm  x:: m ` m m&gt;, relay=local, delay=0.01, delays=0.01/0/0/0.01, dsn=5.2.2, status=bounced (cannot update mailbox /var/mail/root for user root. error writing message: File too large)"]
];
const logsBody = `<div class="pane-logs">
    <div class="logs-bar">
      <div class="seg"><span class="seg-on">Logs</span><span>Metric</span><span>Event</span><span>Process</span></div>
      <div class="logs-q"><i></i><span>(message:"Exception" OR message:"ERROR") AND host:"10-9-</span></div>
      <div class="logs-go">Search</div>
    </div>
    <div class="logs-head"><span>date:</span><span class="k1">host</span><span class="k2">type</span><span>message</span></div>
  </div>
  <div class="log-list">${LOGS.map(l => `<div class="log-entry"><b>${l[0]}</b>&nbsp; <u>${l[1]}</u> <em>Linux_Syslog</em> ${l[2]}</div>`).join("")}</div>
  ${btns("btns-logs", true)}`;

const PROCS = [
  ["2074", "root", "java", "4.25%", "26.20%", "136 Bps", "2019-09-23", "14:02:25", "/usr/lib/jvm/jre-1.7.0-openjdk.x86_64/bin/java -Dpr..."],
  ["28347", "root", "java", "8.10%", "9.12%", "597 kBps", "2019-10-18", "01:23:26", "/data/workspace/jdk/bin/java -Xms6144m -Xmx614..."],
  ["25409", "root", "java", "6.65%", "4.01%", "12 kBps", "2019-10-09", "17:18:14", "java -enableassertions -enablesystemassertions -X..."],
  ["962", "shikailin", "java", "0.01%", "2.57%", "409 Bps", "2019-10-17", "23:59:44", "/usr/lib/jvm/jre-1.7.0-openjdk.x86_64/bin/java -Dpr..."],
  ["23589", "mysql", "mysqld", "0.11%", "1.69%", "12 kBps", "2019-08-08", "06:21:58", "/opt/mysql/bin/mysqld --defaults-file=/opt/mysql/my..."],
  ["12008", "root", "java", "0.01%", "1.11%", "136 Bps", "2019-03-24", "22:27:02", "/data/workspace/jdk/bin/java -Xms500m -Xmx3500..."],
  ["16424", "root", "java", "0.45%", "1.06%", "682 Bps", "2019-07-04", "04:14:21", "/data/workspace/jdk/bin/java -Xms128m -Xmx512m..."],
  ["27305", "root", "java", "0.03%", "0.97%", "136 Bps", "2019-08-20", "06:19:00", "/usr/lib/jvm/jre-1.7.0-openjdk.x86_64/bin/java -Dpr..."]
];
const procBody = `<div class="pane-proc">
    <div class="proc-tabs"><span class="proc-on">Detail</span><span>Aggregation</span></div>
    <div class="p-row p-head"><span></span><span class="p-sort">Process<br>ID</span><span>User</span><span>Process</span><span class="p-sort">CPU<br>Usage</span><span class="p-sort p-sort-on">MEM<br>Usage</span><span class="p-sort">Disk<br>Read</span><span class="p-sort">Disk<br>Write</span><span class="p-sort">Creation Time</span><span>Command</span></div>
    ${PROCS.map(p => `<div class="p-row"><span class="p-exp">+</span><span>${p[0]}</span><span>${p[1]}</span><span>${p[2]}</span><span>${p[3]}</span><span>${p[4]}</span><span>-</span><span>${p[5]}</span><span>${p[6]}<br>${p[7]}</span><span class="p-cmd">${p[8]}</span></div>`).join("")}
  </div>`;

const topoPage = stepBar(1) + topoBody + btns("btns-topo");
appWindow({ x: 573, y: 26, h: 475, rows: MEM_ROWS, navy: true, fold: false, tallCard: true });
appWindow({ x: 1276, y: 26, h: 637, rows: MEM_ROWS, picked: true, popover: true, body: topoPage });
appWindow({ x: 1956, y: 32, h: 637, rows: MEM_ROWS, picked: true, body: topoPage });
appWindow({ x: 44, y: 849, h: 638, rows: MIX_ROWS, picked: true, body: stepBar(2) + chartBody });
appWindow({ x: 753, y: 849, h: 638, rows: MEM_ROWS, picked: true, body: stepBar(3) + eventsBody });
appWindow({ x: 1463, y: 849, h: 638, rows: MEM_ROWS, picked: true, body: stepBar(4) + logsBody });
appWindow({ x: 2131, y: 849, h: 642, rows: MEM_ROWS, picked: true, shortSide: true, body: stepBar(5) + procBody });

/* flow arrows: smooth line through measured points, chevron at the end */
function smooth(p) {
  let d = `M${p[0][0]},${p[0][1]}`;
  for (let i = 0; i < p.length - 1; i++) {
    const a = p[i - 1] || p[i], b = p[i], c = p[i + 1], e = p[i + 2] || c;
    d += ` C${b[0] + (c[0] - a[0]) / 6},${b[1] + (c[1] - a[1]) / 6} ${c[0] - (e[0] - b[0]) / 6},${c[1] - (e[1] - b[1]) / 6} ${c[0]},${c[1]}`;
  }
  return d;
}
function head(p) {
  const t = p[p.length - 1], f = p[p.length - 2];
  const ang = Math.atan2(t[1] - f[1], t[0] - f[0]);
  const wing = s => {
    const a = ang + s * 0.55;
    return `${t[0] - 20 * Math.cos(a)},${t[1] - 20 * Math.sin(a)}`;
  };
  return `M${wing(1)} L${t[0]},${t[1]} L${wing(-1)}`;
}
const ROUTES = [
  [[410,365],[423,363],[460,343],[490,307],[515,278],[540,266],[572,263]],
  [[1164,221],[1270,225],[1441,252],[1556,287],[1678,322],[1760,340],[1910,350],[1955,352]],
  [[2230,327],[2150,328],[2000,332],[1910,336],[1796,343],[1596,363],[1392,388],[1300,407],[1186,427],[1002,468],[883,502],[746,543],[619,593],[523,647],[440,703],[389,757],[361,803],[351,848]],
  [[395,1144],[479,1147],[560,1155],[670,1167],[752,1168]],
  [[1182,1144],[1230,1147],[1291,1155],[1380,1166],[1462,1168]],
  [[1984,1144],[2021,1146],[2062,1158],[2090,1170],[2130,1172]]
];
const DOTS = [[410,365],[1164.5,221],[2230,327],[395,1144],[1182,1144],[1984,1144]];
const flow = document.createElementNS("http://www.w3.org/2000/svg", "svg");
flow.setAttribute("class", "flow");
flow.setAttribute("viewBox", "0 0 2760 1524");
flow.innerHTML = ROUTES.map(r => `<path class="flow-line" d="${smooth(r)}"/><path class="flow-line" d="${head(r)}"/>`).join("")
  + DOTS.map(d => `<circle class="flow-dot" cx="${d[0]}" cy="${d[1]}" r="9.500"/>`).join("");
canvas.appendChild(flow);
```
